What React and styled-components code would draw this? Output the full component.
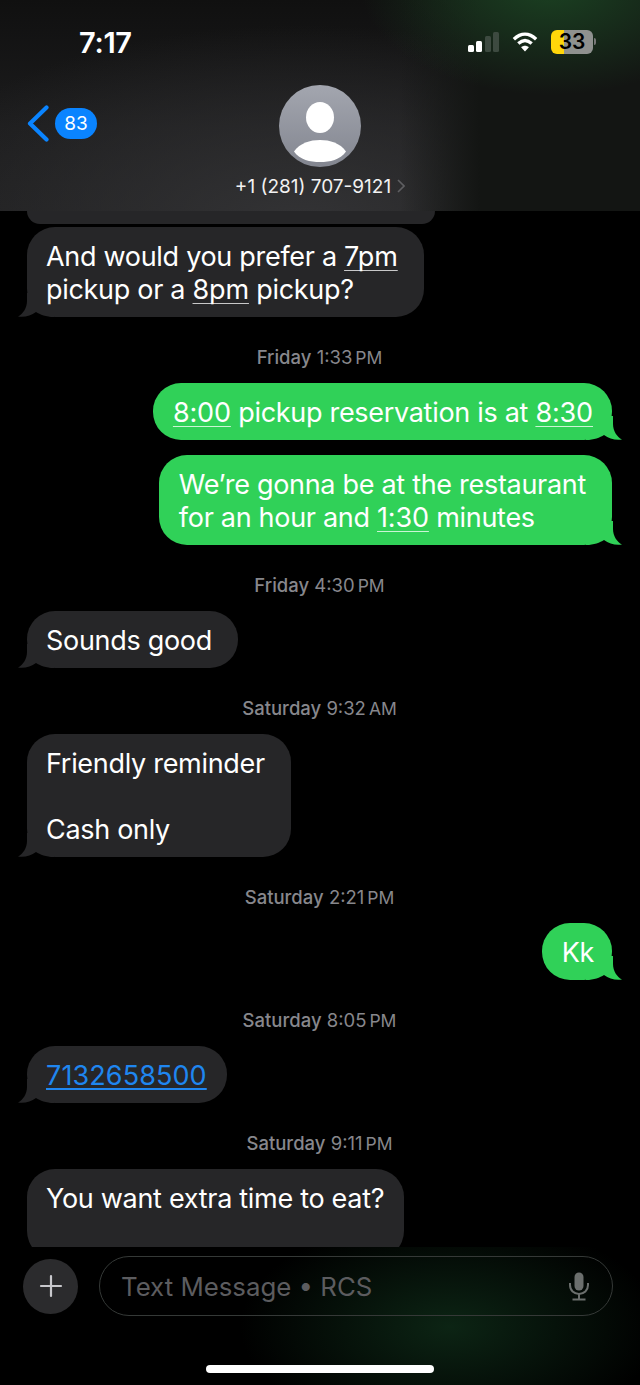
import React from "react";
import styled, { createGlobalStyle } from "styled-components";

const GlobalStyle = createGlobalStyle`
  html, body {
    margin: 0;
    padding: 0;
    background: #000;
  }
  * {
    box-sizing: border-box;
  }
`;

// Conversation, top to bottom. Object parts are underlined; "end" is the bubble's right padding
const thread = [
  { type: "clip" },
  {
    type: "in",
    end: 26,
    lines: [
      ["And would you prefer a ", { u: "7pm" }],
      ["pickup or a ", { u: "8pm" }, " pickup?"],
    ],
  },
  { type: "time", day: "Friday", at: "1:33", ap: "PM" },
  { type: "out", end: 19, lines: [[{ u: "8:00" }, " pickup reservation is at ", { u: "8:30" }]] },
  {
    type: "out",
    end: 26,
    lines: [
      ["We’re gonna be at the restaurant"],
      ["for an hour and ", { u: "1:30" }, " minutes"],
    ],
  },
  { type: "time", day: "Friday", at: "4:30", ap: "PM" },
  { type: "in", end: 26, lines: [["Sounds good"]] },
  { type: "time", day: "Saturday", at: "9:32", ap: "AM" },
  { type: "in", end: 26, lines: [["Friendly reminder"], ["\u00a0"], ["Cash only"]] },
  { type: "time", day: "Saturday", at: "2:21", ap: "PM" },
  { type: "out", end: 18, lines: [["Kk"]] },
  { type: "time", day: "Saturday", at: "8:05", ap: "PM" },
  { type: "in", end: 20, lines: [[{ link: "7132658500" }]] },
  { type: "time", day: "Saturday", at: "9:11", ap: "PM" },
  { type: "in", end: 20, cut: true, lines: [["You want extra time to eat?"], ["\u00a0"]] },
];

const Tail = ({ $out }) => (
  <TailSvg $out={$out} viewBox="0 0 36 24" width="36" height="24">
    <path d="M9 0 L9 8 C9 15 5 21 0 23.5 C7 24.5 13 22.5 18 19 C22 21.5 28 24 36 24 L36 0 Z" />
  </TailSvg>
);

const renderPart = (part, i) => {
  if (typeof part === "string") return <span key={i}>{part}</span>;
  if (part.link) return <PhoneLink key={i}>{part.link}</PhoneLink>;
  return <Detected key={i}>{part.u}</Detected>;
};

const App = () => {
  return (
    <Screen>
      <GlobalStyle />
      <Header>
        <StatusBar>
          <Clock>7:17</Clock>
          <StatusIcons>
            <Signal>
              <SignalBar $h={7} $on />
              <SignalBar $h={11} $on />
              <SignalBar $h={16} />
              <SignalBar $h={20} />
            </Signal>
            <svg width="26" height="20" viewBox="0 0 28 21" fill="none" stroke="#fff" strokeWidth="3.6">
              <path d="M2 7.6 C9.6 0.4 18.4 0.4 26 7.6" />
              <path d="M6.8 12.2 C11.6 7.8 16.4 7.8 21.2 12.2" />
              <path d="M14 20.6 L9.8 16.2 C12.4 14 15.6 14 18.2 16.2 Z" fill="#fff" stroke="none" />
            </svg>
            <Battery>
              <BatteryText>33</BatteryText>
            </Battery>
          </StatusIcons>
        </StatusBar>
        <Nav>
          <BackGroup>
            <svg width="22" height="37" viewBox="0 0 22 37" fill="none" stroke="#0a84ff" strokeWidth="4.2" strokeLinecap="round" strokeLinejoin="round">
              <path d="M19.5 2.5 L3 18.5 L19.5 34.5" />
            </svg>
            <Badge>83</Badge>
          </BackGroup>
          <Contact>
            <Avatar>
              <svg width="82" height="82" viewBox="0 0 82 82" fill="#fff">
                <ellipse cx="41" cy="32.5" rx="14" ry="15.5" />
                <path d="M15 66.5 C21 58 31 55 41 55 C51 55 61 58 67 66.5 C61 75 51 77 41 77 C31 77 21 75 15 66.5 Z" />
              </svg>
            </Avatar>
            <ContactName>
              +1 (281) 707-9121
              <svg width="8" height="14" viewBox="0 0 8 14" fill="none" stroke="#5f5f62" strokeWidth="1.6">
                <path d="M1 1 L7 7 L1 13" />
              </svg>
            </ContactName>
          </Contact>
        </Nav>
      </Header>

      <Thread>
        {thread.map((item, i) => {
          if (item.type === "clip") return <ClippedBubble key={i} />;
          if (item.type === "time") {
            return (
              <Timestamp key={i}>
                <b>{item.day}</b> {item.at}
                <small>{item.ap}</small>
              </Timestamp>
            );
          }
          const out = item.type === "out";
          return (
            <Row key={i} $out={out}>
              <Bubble $out={out} $end={item.end}>
                {item.lines.map((line, j) => (
                  <div key={j}>{line.map(renderPart)}</div>
                ))}
                {!item.cut && <Tail $out={out} />}
              </Bubble>
            </Row>
          );
        })}
      </Thread>

      <Composer>
        <ComposerRow>
          <PlusButton>
            <svg width="24" height="24" viewBox="0 0 24 24" stroke="#c8c8cc" strokeWidth="2.2" strokeLinecap="round">
              <path d="M12 2 V22 M2 12 H22" />
            </svg>
          </PlusButton>
          <InputPill>
            <Placeholder>Text Message • RCS</Placeholder>
            <svg width="20" height="29" viewBox="0 0 20 29" fill="none" stroke="#6b6f6d" strokeWidth="2">
              <rect x="5.5" y="0.5" width="9" height="18" rx="4.5" fill="#6b6f6d" stroke="none" />
              <path d="M1 11 V13 C1 18.5 5 22 10 22 C15 22 19 18.5 19 13 V11" />
              <path d="M10 22 V27.5 M3.5 27.5 H16.5" />
            </svg>
          </InputPill>
        </ComposerRow>
        <HomeIndicator />
      </Composer>
    </Screen>
  );
};

export default App;

const Screen = styled.div`
  width: 640px;
  height: 1385px;
  display: flex;
  flex-direction: column;
  overflow: hidden;
  background: #000;
  color: #fff;
  font-family: "Inter", "Liberation Sans", sans-serif;
`;

const Header = styled.header`
  flex: 0 0 211px;
  padding: 26px 0 0;
  background:
    radial-gradient(ellipse 190px 110px at 550px -15px, rgba(30, 84, 40, 0.7), rgba(24, 60, 32, 0) 100%),
    linear-gradient(90deg, rgba(20, 20, 20, 0) 400px, #131513 480px),
    radial-gradient(ellipse 420px 200px at 300px 225px, #333335 0%, rgba(49, 49, 51, 0) 100%),
    linear-gradient(180deg, #101010 0%, #1c1c1d 60%, #1f1f20 100%);
`;

const StatusBar = styled.div`
  display: flex;
  justify-content: space-between;
  align-items: center;
  height: 32px;
  padding: 0 47px 0 79px;
`;

const Clock = styled.div`
  font-size: 29px;
  font-weight: 600;
  letter-spacing: -0.3px;
`;

const StatusIcons = styled.div`
  display: flex;
  align-items: center;
  gap: 13px;
`;

const Signal = styled.div`
  display: flex;
  align-items: flex-end;
  gap: 2.5px;
  height: 20px;
`;

const SignalBar = styled.i`
  display: block;
  width: 6px;
  height: ${(p) => p.$h}px;
  border-radius: 1.5px;
  background: ${(p) => (p.$on ? "#fff" : "#3d4a40")};
`;

const Battery = styled.div`
  position: relative;
  width: 42px;
  height: 24px;
  border-radius: 6px;
  background: linear-gradient(90deg, #ffd60a 0, #ffd60a 13px, #8f918f 13px);

  &::after {
    content: "";
    position: absolute;
    right: -3px;
    top: 8px;
    width: 2px;
    height: 7px;
    border-radius: 0 2px 2px 0;
    background: #777;
  }
`;

const BatteryText = styled.div`
  text-align: center;
  color: #000;
  font-size: 21px;
  font-weight: 600;
  line-height: 24px;
`;

const Nav = styled.div`
  display: grid;
  grid-template-columns: 1fr auto 1fr;
  margin-top: 27px;
`;

const BackGroup = styled.div`
  display: flex;
  align-items: center;
  align-self: start;
  gap: 6px;
  margin-top: 20px;
  padding-left: 27px;
`;

const Badge = styled.div`
  width: 42px;
  height: 31px;
  border-radius: 16px;
  background: #0a84ff;
  font-size: 19px;
  line-height: 31px;
  text-align: center;
`;

const Contact = styled.div`
  display: flex;
  flex-direction: column;
  align-items: center;
`;

const Avatar = styled.div`
  width: 82px;
  height: 82px;
  border-radius: 50%;
  overflow: hidden;
  background: linear-gradient(180deg, #a3a6af 0%, #838690 100%);

  svg {
    display: block;
  }
`;

const ContactName = styled.div`
  display: flex;
  align-items: center;
  gap: 6px;
  height: 22px;
  margin-top: 8px;
  font-size: 19px;
  color: #f2f2f2;
`;

const Thread = styled.main`
  flex: 1;
  min-height: 0;
  overflow: hidden;
  padding: 0 28px 0 27px;
`;

const ClippedBubble = styled.div`
  width: 408px;
  height: 13px;
  margin-bottom: 3px;
  border-radius: 0 0 24px 24px;
  background: #262628;
`;

const Timestamp = styled.div`
  height: 22px;
  margin: 29px 0 15px;
  font-size: 18.5px;
  line-height: 22px;
  text-align: center;
  color: #87878c;

  b {
    font-weight: 500;
  }

  small {
    margin-left: 3px;
    font-size: 17.5px;
  }
`;

const Row = styled.div`
  display: flex;
  justify-content: ${(p) => (p.$out ? "flex-end" : "flex-start")};

  & + & {
    margin-top: 15px;
  }
`;

const Bubble = styled.div`
  position: relative;
  isolation: isolate;
  padding: 13px ${(p) => p.$end}px 11px ${(p) => (p.$out ? 20 : 19)}px;
  border-radius: 28px;
  background: ${(p) => (p.$out ? "#30d158" : "#262628")};
  font-size: 27px;
  letter-spacing: -0.3px;
  line-height: 33px;
  white-space: nowrap;
`;

const TailSvg = styled.svg`
  position: absolute;
  z-index: -1;
  bottom: 0;
  ${(p) => (p.$out ? "right: -10px; transform: scaleX(-1);" : "left: -9px;")}
  fill: ${(p) => (p.$out ? "#30d158" : "#262628")};
`;

const Detected = styled.span`
  letter-spacing: -0.15px;
  text-decoration: underline;
  text-decoration-color: rgba(255, 255, 255, 0.75);
  text-decoration-thickness: 1px;
  text-decoration-skip-ink: none;
  text-underline-offset: 4px;
`;

const PhoneLink = styled.span`
  color: #1f86f0;
  letter-spacing: 0.1px;
  text-decoration: underline;
  text-decoration-thickness: 1.5px;
  text-underline-offset: 3px;
`;

const Composer = styled.footer`
  flex: 0 0 138px;
  display: flex;
  flex-direction: column;
  padding-top: 9px;
  background: radial-gradient(ellipse 210px 110px at 450px 80px, rgba(24, 72, 40, 0.5), rgba(0, 0, 0, 0) 100%), #000;
`;

const ComposerRow = styled.div`
  display: flex;
  align-items: center;
  gap: 21px;
  padding: 0 27px 0 23px;
`;

const PlusButton = styled.div`
  flex: 0 0 55px;
  height: 55px;
  display: flex;
  align-items: center;
  justify-content: center;
  border-radius: 50%;
  background: #2b2b2d;
`;

const InputPill = styled.div`
  flex: 1;
  height: 60px;
  display: flex;
  align-items: center;
  justify-content: space-between;
  padding: 0 23px 0 21px;
  border: 1.5px solid #353937;
  border-radius: 30px;
`;

const Placeholder = styled.span`
  font-size: 25.8px;
  color: #5c5c5f;
`;

const HomeIndicator = styled.div`
  width: 228px;
  height: 8px;
  margin: 49px auto 0;
  border-radius: 4px;
  background: #fff;
`;
